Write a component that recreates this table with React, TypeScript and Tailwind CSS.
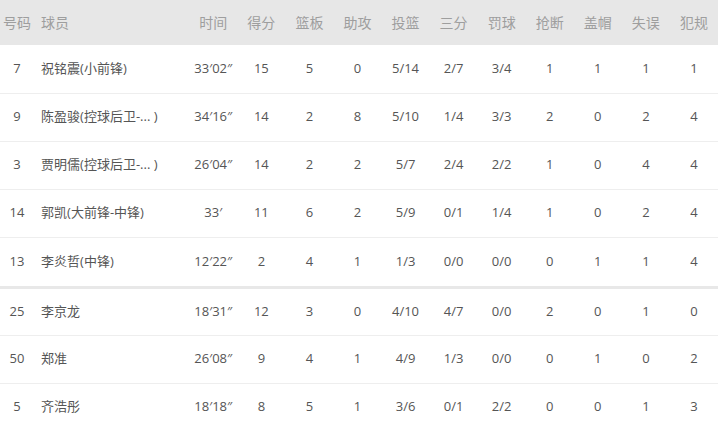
const cols = ["时间", "得分", "篮板", "助攻", "投篮", "三分", "罚球", "抢断", "盖帽", "失误", "犯规"];

const starters = [
  { no: "7", name: "祝铭震(小前锋)", stats: ["33′02″", "15", "5", "0", "5/14", "2/7", "3/4", "1", "1", "1", "1"] },
  { no: "9", name: "陈盈骏(控球后卫-... )", stats: ["34′16″", "14", "2", "8", "5/10", "1/4", "3/3", "2", "0", "2", "4"] },
  { no: "3", name: "贾明儒(控球后卫-... )", stats: ["26′04″", "14", "2", "2", "5/7", "2/4", "2/2", "1", "0", "4", "4"] },
  { no: "14", name: "郭凯(大前锋-中锋)", stats: ["33′", "11", "6", "2", "5/9", "0/1", "1/4", "1", "0", "2", "4"] },
  { no: "13", name: "李炎哲(中锋)", stats: ["12′22″", "2", "4", "1", "1/3", "0/0", "0/0", "0", "1", "1", "4"] },
];

const bench = [
  { no: "25", name: "李京龙", stats: ["18′31″", "12", "3", "0", "4/10", "4/7", "0/0", "2", "0", "1", "0"] },
  { no: "50", name: "郑准", stats: ["26′08″", "9", "4", "1", "4/9", "1/3", "0/0", "0", "1", "0", "2"] },
  { no: "5", name: "齐浩彤", stats: ["18′18″", "8", "5", "1", "3/6", "0/1", "2/2", "0", "0", "1", "3"] },
];

type Player = (typeof starters)[number];

function Row({ p, last }: { p: Player; last?: boolean }) {
  return (
    <tr className={last ? "h-[50px] border-b-[3px] border-[#e8e8e8]" : "h-[48px] border-b border-[#eeeeee]"}>
      <td className="text-center">{p.no}</td>
      <td className="pl-[7px] whitespace-nowrap">{p.name}</td>
      {p.stats.map((s, i) => (
        <td key={i} className="text-center">{s}</td>
      ))}
    </tr>
  );
}

export default function App() {
  return (
    <div className="w-[720px] h-[428px] overflow-hidden bg-white">
      <table
        className="w-[718px] table-fixed border-collapse text-[13px] text-[#555]"
        style={{ fontFamily: "'Open Sans', 'Noto Sans CJK SC', sans-serif" }}
      >
        <colgroup>
          <col className="w-[34px]" />
          <col className="w-[155px]" />
          {cols.map((c) => (
            <col key={c} className="w-[48px]" />
          ))}
        </colgroup>
        <thead>
          <tr className="h-[45px] bg-[#e7e7e7] text-[#9e9e9e] text-[14px]">
            <th className="font-normal text-center">号码</th>
            <th className="font-normal text-left pl-[7px]">球员</th>
            {cols.map((c) => (
              <th key={c} className="font-normal text-center">{c}</th>
            ))}
          </tr>
        </thead>
        <tbody>
          {starters.map((p, i) => (
            <Row key={p.no} p={p} last={i === starters.length - 1} />
          ))}
          {bench.map((p) => (
            <Row key={p.no} p={p} />
          ))}
        </tbody>
      </table>
    </div>
  );
}
